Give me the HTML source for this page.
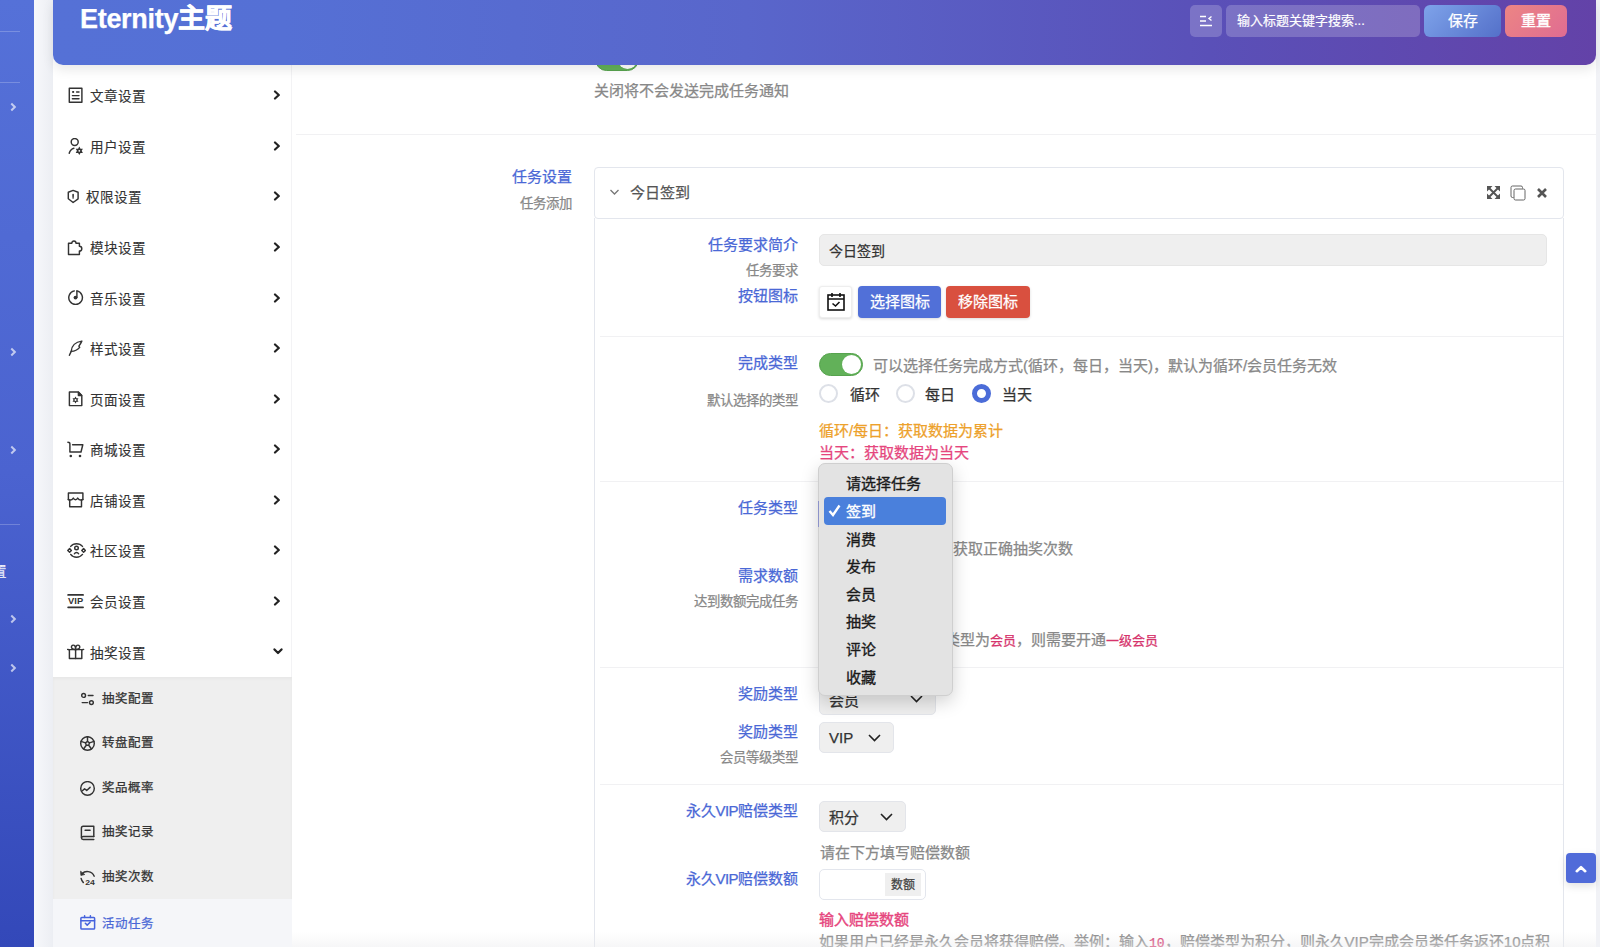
<!DOCTYPE html>
<html lang="zh-CN"><head><meta charset="utf-8">
<style>
*{box-sizing:border-box;margin:0;padding:0}
html,body{width:1600px;height:947px;overflow:hidden}
body{position:relative;text-spacing-trim:space-all;-webkit-text-stroke-width:0.25px;background:#f1f2f6;font-family:"Liberation Sans",sans-serif;font-size:14px;color:#333}
.abs{position:absolute}
#adminbar{left:0;top:0;width:34px;height:947px;background:linear-gradient(180deg,#5571d8 0%,#4b63d0 50%,#3348b9 100%)}
#adminbar .ln{position:absolute;left:0;width:20px;height:1px;background:rgba(255,255,255,.22)}
#adminbar .chev{position:absolute;left:9px;width:6px;height:6px;border-right:2.5px solid rgba(255,255,255,.65);border-top:2.5px solid rgba(255,255,255,.65);transform:rotate(45deg)}
#shadowstrip{left:34px;top:0;width:19px;height:947px;background:linear-gradient(90deg,#f7f8fb,#eceef3)}
#content{left:53px;top:0;width:1543px;height:947px;background:#fff}
#header{left:53px;top:0;width:1543px;height:64.5px;border-radius:0 0 10px 10px;background:linear-gradient(90deg,#5571d6 0%,#5570d5 15%,#5966cb 45%,#5a50b8 75%,#6342a8 100%);box-shadow:0 5px 12px rgba(0,0,0,.09)}
#title{left:80px;top:-3px;font-size:27px;font-weight:bold;color:#fff;letter-spacing:-0.3px}
#sidebar{left:53px;top:0;width:239px;height:947px;background:#fff;border-right:1px solid #f3f3f5}
.mi{position:absolute;left:0;width:238px;height:50px}
.mi .t{position:absolute;left:37px;top:50%;transform:translateY(-50%);margin-top:-0.5px;font-size:13.6px;color:#333;-webkit-text-stroke-width:0.12px;white-space:nowrap}
.mi svg.ar{position:absolute;left:219.5px;top:50%;margin-top:-5.5px}
.mi .ar.dn{transform:rotate(135deg);margin-top:-5px}
.mi svg{position:absolute;left:14px;top:50%;margin-top:-8px;-webkit-text-stroke:0}
#sub{left:0;top:677px;width:239px;height:222px;background:#efefef;box-shadow:inset 0 2px 3px rgba(0,0,0,.035)}
.si{position:absolute;left:0;width:238px;height:44px}
.si .t{position:absolute;left:49px;top:50%;transform:translateY(-50%);margin-top:-2px;font-size:12.5px;color:#333;white-space:nowrap}
.si svg{position:absolute;left:26px;top:50%;margin-top:-7px}
#main{left:292px;top:0;width:1304px;height:947px;background:#fff}
.lbl{position:absolute;margin-top:-1.5px;font-size:15px;color:#4a68d6;white-space:nowrap;text-align:right}
.sub{position:absolute;margin-top:-1px;font-size:13.4px;color:#888;white-space:nowrap;text-align:right}
.hr{position:absolute;height:1px;background:#f1f1f3}
.txt{position:absolute;white-space:nowrap;margin-top:-2px}

.tog{width:44px;height:23px;border-radius:12px;background:#62b159;border:1.5px solid #57a34e}
.tog::after{content:"";position:absolute;right:1px;top:1px;width:19px;height:19px;border-radius:50%;background:#fff}
.radio{width:19px;height:19px;border-radius:50%;border:2px solid #dde0e7;background:#fff}
.radio.on{border:5px solid #4b6cd8}
.sel{background:#efefef;border:1px solid #e3e5ea;border-radius:5px}
.btn{color:#fff;font-size:15px;text-align:center;line-height:32px;border-radius:4px;box-shadow:0 1px 3px rgba(0,0,0,.15)}
.btn2{color:#fff;font-size:15px;text-align:center;line-height:32px;border-radius:6px}
.dd{position:absolute;margin-top:-2.5px;left:846px;font-size:15px;color:#1a1a1a;white-space:nowrap;-webkit-text-stroke-width:0.35px}
</style></head><body>
<div id="adminbar" class="abs">
  <div class="ln" style="top:31px"></div>
  <div class="ln" style="top:82px"></div>
  <div class="ln" style="top:524px"></div>
  <div class="chev" style="top:104px"></div>
  <div class="chev" style="top:349px"></div>
  <div class="chev" style="top:447px"></div>
  <div class="chev" style="top:616px"></div>
  <div class="chev" style="top:665px"></div>
  <div class="txt" style="left:-7.5px;top:562px;font-size:13.5px;color:rgba(255,255,255,.85)">置</div>
</div>
<div id="shadowstrip" class="abs"></div>
<div id="main" class="abs"></div>
<div id="sidebar" class="abs">
<div class="mi" style="top:70px"><svg width="17" height="17" viewBox="0 0 17 17" fill="none" stroke="#333" stroke-width="1.45" stroke-linejoin="round" stroke-linecap="round"><rect x="2.3" y="1.2" width="12.6" height="14"/><rect x="5.2" y="4" width="1.9" height="1.9" fill="#333" stroke="none"/><path d="M9.6 5H12M5.4 8.6h6.6M5.4 11.7h6.6"/></svg><span class="t" style="left:37px">文章设置</span><svg class="ar" width="9" height="10" viewBox="0 0 9 10"><path d="M2 1.5L5.8 5 2 8.5" fill="none" stroke="#222" stroke-width="2.2" stroke-linecap="round" stroke-linejoin="round"/></svg></div>
<div class="mi" style="top:121px"><svg width="17" height="17" viewBox="0 0 17 17" fill="none" stroke="#333" stroke-width="1.45" stroke-linejoin="round" stroke-linecap="round"><circle cx="7.7" cy="4" r="3.5"/><path d="M2.2 15.2C3 12.5 4.6 10.8 6.9 10.2"/><path d="M12.3 9.6l1.2 2.1h2.4l-1.2 2.1 1.2 2.1h-2.4l-1.2 2.1-1.2-2.1H8.7l1.2-2.1-1.2-2.1h2.4z" transform="translate(0,-1)" fill="#333" stroke="none"/><circle cx="12.3" cy="12.8" r="0.9" fill="#fff" stroke="none"/></svg><span class="t" style="left:37px">用户设置</span><svg class="ar" width="9" height="10" viewBox="0 0 9 10"><path d="M2 1.5L5.8 5 2 8.5" fill="none" stroke="#222" stroke-width="2.2" stroke-linecap="round" stroke-linejoin="round"/></svg></div>
<div class="mi" style="top:171px"><svg width="13" height="17" viewBox="0 0 13 17" fill="none" stroke="#333" stroke-width="1.45" stroke-linejoin="round" stroke-linecap="round"><path d="M1.3 4.2L6.1 2.4l5 1.8v6.6L6.1 14.5 1.3 10.8z"/><path d="M6.1 6.6v1.8M6.1 9.8v.1" stroke-width="1.6"/></svg><span class="t" style="left:33px">权限设置</span><svg class="ar" width="9" height="10" viewBox="0 0 9 10"><path d="M2 1.5L5.8 5 2 8.5" fill="none" stroke="#222" stroke-width="2.2" stroke-linecap="round" stroke-linejoin="round"/></svg></div>
<div class="mi" style="top:222px"><svg width="17" height="17" viewBox="0 0 17 17" fill="none" stroke="#333" stroke-width="1.45" stroke-linejoin="round" stroke-linecap="round"><path d="M1.5 4.3H4.8C4.8 1.2 9 1.2 9 4.3H12.4V7.3C15.6 7.3 15.6 12 12.4 12V15.5H1.5Z"/></svg><span class="t" style="left:37px">模块设置</span><svg class="ar" width="9" height="10" viewBox="0 0 9 10"><path d="M2 1.5L5.8 5 2 8.5" fill="none" stroke="#222" stroke-width="2.2" stroke-linecap="round" stroke-linejoin="round"/></svg></div>
<div class="mi" style="top:273px"><svg width="17" height="17" viewBox="0 0 17 17" fill="none" stroke="#333" stroke-width="1.45" stroke-linejoin="round" stroke-linecap="round"><path d="M7.3 0.9A6.8 6.8 0 1 0 9.9 0.9"/><path d="M9.9 0.9V7.4"/><circle cx="8.5" cy="7.6" r="1.9" fill="#333" stroke="none"/></svg><span class="t" style="left:37px">音乐设置</span><svg class="ar" width="9" height="10" viewBox="0 0 9 10"><path d="M2 1.5L5.8 5 2 8.5" fill="none" stroke="#222" stroke-width="2.2" stroke-linecap="round" stroke-linejoin="round"/></svg></div>
<div class="mi" style="top:323px"><svg width="17" height="17" viewBox="0 0 17 17" fill="none" stroke="#333" stroke-width="1.45" stroke-linejoin="round" stroke-linecap="round"><path d="M2.4 15.3L4.2 11.4"/><path d="M4.2 11.4C4.5 6 8.5 2 14.8 1.1C14 3 13 4.5 11.9 6.1L12.7 7.4C10.5 10 8 11.2 4.2 11.4Z"/></svg><span class="t" style="left:37px">样式设置</span><svg class="ar" width="9" height="10" viewBox="0 0 9 10"><path d="M2 1.5L5.8 5 2 8.5" fill="none" stroke="#222" stroke-width="2.2" stroke-linecap="round" stroke-linejoin="round"/></svg></div>
<div class="mi" style="top:374px"><svg width="17" height="17" viewBox="0 0 17 17" fill="none" stroke="#333" stroke-width="1.45" stroke-linejoin="round" stroke-linecap="round"><path d="M2.4 0.9H11.4L14.8 4.4V14.6H2.4Z"/><path d="M11.4 1.2V4.4H14.6z" fill="#333"/><path d="M8.5 4.6l1.3 2.2h2.5l-1.3 2.2 1.3 2.2H9.8l-1.3 2.2-1.3-2.2H4.7l1.3-2.2-1.3-2.2h2.5z" fill="#333" stroke="none" transform="translate(8.5 8.9) scale(0.78) translate(-8.5 -8.9)"/><circle cx="8.5" cy="8.9" r="1" fill="#fff" stroke="none"/></svg><span class="t" style="left:37px">页面设置</span><svg class="ar" width="9" height="10" viewBox="0 0 9 10"><path d="M2 1.5L5.8 5 2 8.5" fill="none" stroke="#222" stroke-width="2.2" stroke-linecap="round" stroke-linejoin="round"/></svg></div>
<div class="mi" style="top:424px"><svg width="17" height="17" viewBox="0 0 17 17" fill="none" stroke="#333" stroke-width="1.45" stroke-linejoin="round" stroke-linecap="round"><path d="M0.9 1.2C2 1.2 2.9 1.6 2.9 2.8V11H14L15.8 3.8H5.6"/><circle cx="3.8" cy="15" r="1.3" fill="#333" stroke="none"/><circle cx="13" cy="15" r="1.3" fill="#333" stroke="none"/></svg><span class="t" style="left:37px">商城设置</span><svg class="ar" width="9" height="10" viewBox="0 0 9 10"><path d="M2 1.5L5.8 5 2 8.5" fill="none" stroke="#222" stroke-width="2.2" stroke-linecap="round" stroke-linejoin="round"/></svg></div>
<div class="mi" style="top:475px"><svg width="17" height="17" viewBox="0 0 17 17" fill="none" stroke="#333" stroke-width="1.45" stroke-linejoin="round" stroke-linecap="round"><path d="M1.4 7.4V1H15.9V7.4"/><path d="M1.2 7.5C3 8.4 5 8.2 6.3 6.1C7.2 8.3 9.8 8.3 10.7 6.1C12 8.2 14 8.4 15.9 7.5"/><path d="M2.7 8.2V14.8H14.5V8.2"/></svg><span class="t" style="left:37px">店铺设置</span><svg class="ar" width="9" height="10" viewBox="0 0 9 10"><path d="M2 1.5L5.8 5 2 8.5" fill="none" stroke="#222" stroke-width="2.2" stroke-linecap="round" stroke-linejoin="round"/></svg></div>
<div class="mi" style="top:525px"><svg width="19" height="17" viewBox="-1 0 19 17" fill="none" stroke="#333" stroke-width="1.45" stroke-linejoin="round" stroke-linecap="round"><path d="M2.7 4.4C5.5 0.8 11.5 0.8 14.5 4.4M2.7 12.4C5.5 16.2 11.5 16.2 14.5 12.4"/><circle cx="8.5" cy="6" r="1.8"/><path d="M6.4 11.8C7.3 10 9.7 10 10.6 11.8"/><path d="M1.6 6.6L3.4 8.4 1.6 10.2-0.2 8.4z"/><path d="M15.6 6.6L17.4 8.4 15.6 10.2 13.8 8.4z"/></svg><span class="t" style="left:37px">社区设置</span><svg class="ar" width="9" height="10" viewBox="0 0 9 10"><path d="M2 1.5L5.8 5 2 8.5" fill="none" stroke="#222" stroke-width="2.2" stroke-linecap="round" stroke-linejoin="round"/></svg></div>
<div class="mi" style="top:576px"><svg width="17" height="17" viewBox="0 0 17 17"><path d="M1.1 1.9H16.1M1.1 14.3H16.1" stroke="#333" stroke-width="1.7" stroke-linecap="round"/><text x="1.1" y="10.9" font-size="8.6" font-weight="bold" fill="#333" font-family="Liberation Sans" textLength="15" lengthAdjust="spacingAndGlyphs">VIP</text></svg><span class="t" style="left:37px">会员设置</span><svg class="ar" width="9" height="10" viewBox="0 0 9 10"><path d="M2 1.5L5.8 5 2 8.5" fill="none" stroke="#222" stroke-width="2.2" stroke-linecap="round" stroke-linejoin="round"/></svg></div>
<div class="mi" style="top:627px"><svg width="18" height="17" viewBox="0 0 18 17" fill="none" stroke="#333" stroke-width="1.45" stroke-linejoin="round" stroke-linecap="round"><path d="M0.6 5.4C1.5 5.6 2.2 5.6 2.4 6.2V14.5H14.8V6.2C15 5.6 15.8 5.6 16.6 5.4"/><path d="M2.4 5.6H14.8M8.6 5.6V14.5"/><path d="M8.6 5.4C6.5 5.6 4.4 4.8 4.4 3.1S6 0.8 7.2 1.3 8.6 3.5 8.6 5.4C8.6 3.5 8.8 1.8 10 1.3S12.8 1.5 12.8 3.1 10.6 5.6 8.6 5.4z"/></svg><span class="t" style="left:37px">抽奖设置</span><svg class="ar" width="10" height="9" viewBox="0 0 10 9" style="margin-top:-5px"><path d="M1.5 2.4L5 6 8.5 2.4" fill="none" stroke="#222" stroke-width="2.2" stroke-linecap="round" stroke-linejoin="round"/></svg></div>
<div id="sub" class="abs">
 <div class="si" style="top:0px"><svg width="17" height="17" viewBox="0 0 17 17" fill="none" stroke="#333" stroke-width="1.45" stroke-linejoin="round" stroke-linecap="round"><circle cx="4.6" cy="3.45" r="1.9"/><path d="M9.3 3.45H14M3.2 10.6H8.5"/><circle cx="12.4" cy="10.6" r="1.9"/></svg><span class="t">抽奖配置</span></div>
 <div class="si" style="top:44px"><svg width="17" height="17" viewBox="0 0 17 17" fill="none" stroke="#333" stroke-width="1.45" stroke-linejoin="round" stroke-linecap="round"><circle cx="8.5" cy="7.5" r="6.8"/><path d="M8.50 5.40L10.50 6.85L9.73 9.20L7.27 9.20L6.50 6.85ZM8.50 5.40L8.50 0.70M10.50 6.85L14.97 5.40M9.73 9.20L12.50 13.00M7.27 9.20L4.50 13.00M6.50 6.85L2.03 5.40"/></svg><span class="t">转盘配置</span></div>
 <div class="si" style="top:89px"><svg width="17" height="17" viewBox="0 0 17 17" fill="none" stroke="#333" stroke-width="1.45" stroke-linejoin="round" stroke-linecap="round"><circle cx="8.5" cy="7.4" r="6.8"/><path d="M3.4 9.8L5.6 7.7 7.7 9.5 11.1 6.35"/></svg><span class="t">奖品概率</span></div>
 <div class="si" style="top:133px"><svg width="17" height="17" viewBox="0 0 17 17" fill="none" stroke="#333" stroke-width="1.45" stroke-linejoin="round" stroke-linecap="round"><path d="M14.8 11.4V1.3H4.2C3 1.3 2.4 2 2.4 3.2V12.8C2.4 13.9 3 14.5 4.2 14.5H14.8"/><path d="M2.6 12.6C2.6 11.9 3.2 11.4 4.2 11.4H14.8M6.1 5.3H11.1"/></svg><span class="t">抽奖记录</span></div>
 <div class="si" style="top:178px"><svg width="17" height="17" viewBox="0 0 17 17" fill="none" stroke="#333" stroke-width="1.45" stroke-linejoin="round" stroke-linecap="round"><path d="M3.2 3.6C5.8 0.6 12.8 0.4 15.2 6.2"/><path d="M1.6 1.6L1.9 5.4 5.4 4.6z" fill="#333" stroke-width="0.8"/><path d="M2.1 8.4C2.5 10.3 3.3 11.6 4.4 12.6"/><text x="6.2" y="14.6" font-size="8" font-weight="bold" fill="#333" stroke="none" font-family="Liberation Sans" textLength="9.6" lengthAdjust="spacingAndGlyphs">24</text></svg><span class="t">抽奖次数</span></div>
</div>
<div class="abs" style="left:0;top:899px;width:239px;height:48px;background:#f5f6f9">
 <svg class="abs" style="left:26px;top:16px" width="17" height="17" viewBox="0 0 17 17" fill="none" stroke="#4663dd" stroke-width="1.5" stroke-linejoin="round" stroke-linecap="round"><rect x="1.9" y="2.4" width="13.7" height="11.6" rx="0.8"/><path d="M1.9 5.8H15.6M5.6 0.8V2.6M11.4 0.8V2.6M6.35 8.3L8.2 10.1 11.1 7.2"/></svg>
 <span class="txt" style="left:49px;top:16px;font-size:12.5px;color:#4a68d6">活动任务</span>
</div>
</div>


<div id="mainc" class="abs" style="left:0;top:0;width:1600px;height:947px">
 <!-- top toggle partially hidden -->
 <div class="abs tog" style="left:595px;top:48px"></div>
 <div class="txt" style="left:594px;top:81px;font-size:15px;color:#888">关闭将不会发送完成任务通知</div>
 <div class="hr" style="left:296px;top:134px;width:1300px"></div>
 <div class="lbl" style="right:1028px;top:166px;">任务设置</div>
 <div class="sub" style="right:1028px;top:193px;">任务添加</div>
 <!-- accordion -->
 <div class="abs" style="left:594px;top:167px;width:970px;height:52px;border:1px solid #e3e6ed;border-radius:4px;background:#fff"></div>
 <div class="abs" style="left:594px;top:218px;width:970px;height:740px;border:1px solid #e3e6ed;border-top:none"></div>
 <svg class="abs" style="left:609px;top:188px" width="11" height="8" viewBox="0 0 11 8" fill="none" stroke="#777" stroke-width="1.3"><path d="M1.5 2l4 4 4-4"/></svg>
 <div class="txt" style="left:630px;top:183px;font-size:15px;color:#555">今日签到</div>
 <svg class="abs" style="left:1487px;top:186px" width="13" height="13" viewBox="0 0 13 13" fill="#555"><path d="M0 0h5.5L0 5.5zM13 0v5.5L7.5 0zM0 13V7.5L5.5 13zM13 13H7.5L13 7.5z"/><path d="M2 2l9 9M11 2l-9 9" stroke="#555" stroke-width="1.9"/></svg>
 <svg class="abs" style="left:1510px;top:185px" width="16" height="16" viewBox="0 0 16 16" fill="none" stroke="#555" stroke-width="0.9"><path d="M3.5 12.5H2.5a1.5 1.5 0 01-1.5-1.5V2.5A1.5 1.5 0 012.5 1h8.5a1.5 1.5 0 011.5 1.5v1"/><rect x="4" y="4" width="11" height="11" rx="1.5"/></svg>
 <svg class="abs" style="left:1537px;top:188px" width="10" height="10" viewBox="0 0 10 10" stroke="#555" stroke-width="2.6" stroke-linecap="butt"><path d="M1 1l8 8M9 1l-8 8"/></svg>

 <!-- row1 -->
 <div class="lbl" style="right:802px;top:234px;">任务要求简介</div>
 <div class="sub" style="right:802px;top:260px;">任务要求</div>
 <div class="abs" style="left:819px;top:234px;width:728px;height:32px;background:#efefef;border:1px solid #e6e6e6;border-radius:5px"></div>
 <div class="txt" style="left:829px;top:242px;font-size:14px;color:#333">今日签到</div>
 <div class="lbl" style="right:802px;top:285px;">按钮图标</div>
 <div class="abs" style="left:819px;top:286px;width:33px;height:32px;background:#fff;border:1px solid #eee;border-radius:3px;box-shadow:0 1px 3px rgba(0,0,0,.15)"></div>
 <svg class="abs" style="left:827px;top:292px" width="18" height="19" viewBox="0 0 18 19" fill="none" stroke="#111" stroke-width="1.6"><rect x="1" y="3" width="16" height="15"/><path d="M1 7h16M5 1v4M13 1v4M5.5 11.5l3 2.5 4-4"/></svg>
 <div class="abs btn" style="left:858px;top:286px;width:83px;height:32px;background:#5170d8">选择图标</div>
 <div class="abs btn" style="left:946px;top:286px;width:84px;height:32px;background:#d9503f">移除图标</div>
 <div class="hr" style="left:600px;top:336px;width:963px"></div>

 <!-- row2 -->
 <div class="lbl" style="right:802px;top:352px;">完成类型</div>
 <div class="abs tog" style="left:819px;top:353px"></div>
 <div class="txt" style="left:873px;top:356px;font-size:15px;color:#888">可以选择任务完成方式(循环，每日，当天)，默认为循环/会员任务无效</div>
 <div class="sub" style="right:802px;top:390px;">默认选择的类型</div>
 <div class="abs radio" style="left:819px;top:384px"></div>
 <div class="txt" style="left:850px;top:385px;font-size:15px;color:#333">循环</div>
 <div class="abs radio" style="left:896px;top:384px"></div>
 <div class="txt" style="left:925px;top:385px;font-size:15px;color:#333">每日</div>
 <div class="abs radio on" style="left:972px;top:384px"></div>
 <div class="txt" style="left:1002px;top:385px;font-size:15px;color:#333">当天</div>
 <div class="txt" style="left:819px;top:421px;font-size:15px;color:#eda12b">循环/每日：获取数据为累计</div>
 <div class="txt" style="left:819px;top:443px;font-size:15px;color:#e6467e">当天：获取数据为当天</div>
 <div class="hr" style="left:600px;top:481px;width:963px"></div>

 <!-- row3 -->
 <div class="lbl" style="right:802px;top:497px;">任务类型</div>
 <div class="abs sel" style="left:819px;top:497px;width:130px;height:30px"></div>
 <div class="txt" style="right:527px;top:539px;font-size:15px;color:#888">填写数额才能获取正确抽奖次数</div>
 <div class="lbl" style="right:802px;top:565px;">需求数额</div>
 <div class="sub" style="right:802px;top:591px;">达到数额完成任务</div>
 <div class="txt" style="right:442px;top:630px;font-size:15px;color:#888">如果任务类型为<span style="color:#d6336c;font-size:13px">会员</span>，则需要开通<span style="color:#d6336c;font-size:13px">一级会员</span></div>
 <div class="hr" style="left:600px;top:667px;width:963px"></div>

 <!-- row4 -->
 <div class="lbl" style="right:802px;top:683px;">奖励类型</div>
 <div class="abs sel" style="left:819px;top:685px;width:117px;height:30px"></div>
 <div class="txt" style="left:829px;top:691px;font-size:15px;color:#333">会员</div>
 <svg class="abs chv" style="left:910px;top:695px" width="13" height="8" viewBox="0 0 13 8" fill="none" stroke="#222" stroke-width="1.6"><path d="M1 1l5.5 5.5L12 1"/></svg>
 <div class="lbl" style="right:802px;top:721px;">奖励类型</div>
 <div class="abs sel" style="left:819px;top:722px;width:75px;height:31px"></div>
 <div class="txt" style="left:829px;top:731px;font-size:15px;color:#333">VIP</div>
 <svg class="abs chv" style="left:868px;top:734px" width="13" height="8" viewBox="0 0 13 8" fill="none" stroke="#222" stroke-width="1.6"><path d="M1 1l5.5 5.5L12 1"/></svg>
 <div class="sub" style="right:802px;top:747px;">会员等级类型</div>
 <div class="hr" style="left:600px;top:784px;width:963px"></div>

 <!-- row5 -->
 <div class="lbl" style="right:802px;top:800px;">永久<span style="letter-spacing:-0.6px">VIP</span>赔偿类型</div>
 <div class="abs sel" style="left:819px;top:801px;width:87px;height:31px"></div>
 <div class="txt" style="left:829px;top:808px;font-size:15px;color:#333">积分</div>
 <svg class="abs chv" style="left:880px;top:813px" width="13" height="8" viewBox="0 0 13 8" fill="none" stroke="#222" stroke-width="1.6"><path d="M1 1l5.5 5.5L12 1"/></svg>
 <div class="txt" style="left:820px;top:843px;font-size:15px;color:#888">请在下方填写赔偿数额</div>
 <div class="lbl" style="right:802px;top:868px;">永久<span style="letter-spacing:-0.6px">VIP</span>赔偿数额</div>
 <div class="abs" style="left:819px;top:869px;width:107px;height:31px;border:1px solid #e3e6ed;border-radius:5px;background:#fff"></div>
 <div class="abs" style="left:885px;top:873px;width:36px;height:23px;background:#efefef"></div>
 <div class="txt" style="left:891px;top:877px;font-size:12px;color:#444">数额</div>
 <div class="txt" style="left:819px;top:910px;font-size:15px;color:#e6467e;-webkit-text-stroke:0.4px #e6467e">输入赔偿数额</div>
 <div class="txt" style="left:819px;top:932px;font-size:15px;color:#888">如果用户已经是永久会员将获得赔偿。举例：输入<span style="font-family:'Liberation Mono',monospace;color:#d6336c;font-size:13px">10</span>，赔偿类型为积分，则永久VIP完成会员类任务返还10点积</div>
 <div class="abs" style="left:292px;top:932px;width:1304px;height:15px;background:linear-gradient(180deg,rgba(236,236,238,0),rgba(236,236,238,.45))"></div>

 <!-- dropdown -->
 <div class="abs" style="left:818px;top:463px;width:135px;height:233px;background:#e3e3e3;border:1px solid #cfcfcf;border-radius:7px;box-shadow:0 6px 18px rgba(0,0,0,.18)"></div>
 <div class="abs" style="left:818px;top:501px;width:1px;height:26px;background:#8c92c9"></div>
 <div class="abs" style="left:824px;top:497px;width:122px;height:28px;background:#4a80dc;border-radius:4px"></div>
 <svg class="abs" style="left:828px;top:504px" width="13" height="13" viewBox="0 0 13 13" fill="none" stroke="#fff" stroke-width="2.4"><path d="M1.5 7l3.5 4L11.5 1.5"/></svg>
 <div class="dd" style="top:474px">请选择任务</div>
 <div class="dd" style="top:502px;color:#fff">签到</div>
 <div class="dd" style="top:530px">消费</div>
 <div class="dd" style="top:557px">发布</div>
 <div class="dd" style="top:585px">会员</div>
 <div class="dd" style="top:612px">抽奖</div>
 <div class="dd" style="top:640px">评论</div>
 <div class="dd" style="top:668px">收藏</div>

 <!-- scroll top -->
 <div class="abs" style="left:1566px;top:853px;width:30px;height:30px;background:#506bd9;border-radius:4px;box-shadow:0 3px 8px rgba(0,0,0,.12)"></div>
 <svg class="abs" style="left:1575px;top:864px" width="12" height="9" viewBox="0 0 12 9" fill="none" stroke="#fff" stroke-width="2.6" stroke-linecap="round" stroke-linejoin="round"><path d="M1.8 7.2L6 3.2l4.2 4"/></svg>
</div>
<div id="header" class="abs"></div>
<div id="title" class="abs">Eternity<span style="-webkit-text-stroke:0.6px #fff">主题</span></div>
<div class="abs" style="left:1190px;top:5px;width:32px;height:32px;border-radius:5px;background:rgba(255,255,255,.2)"></div>
<svg class="abs" style="left:1199px;top:15px" width="14" height="12" viewBox="0 0 14 12" fill="none" stroke="#fff" stroke-width="1.4"><path d="M1 1.5h6M1 6h6M1 10.5h12M12.5 1.5L10 3.5l2.5 2"/></svg>
<div class="abs" style="left:1226px;top:5px;width:194px;height:32px;border-radius:5px;background:rgba(255,255,255,.2)"></div>
<div class="txt" style="left:1237px;top:12px;font-size:13px;color:#fff;-webkit-text-stroke:0.2px #fff">输入标题关键字搜索...</div>
<div class="abs btn2" style="left:1424px;top:5px;width:77px;height:32px;background:linear-gradient(135deg,#7ea3ea,#5470c9)">保存</div>
<div class="abs btn2" style="left:1505px;top:5px;width:62px;height:32px;background:linear-gradient(135deg,#ec8584,#e06c92);-webkit-text-stroke:0.4px #fff">重置</div>
</body></html>
